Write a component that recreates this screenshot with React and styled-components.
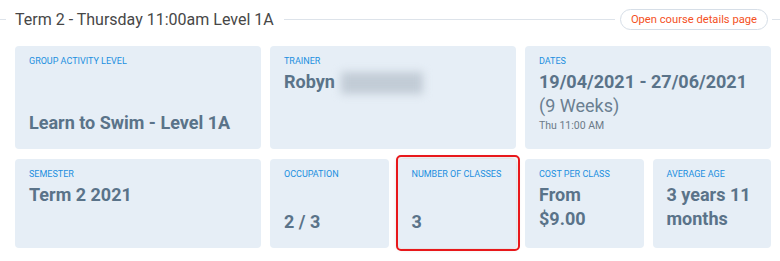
import React from 'react';
import styled, { createGlobalStyle } from 'styled-components';

const GlobalStyle = createGlobalStyle`
  body {
    margin: 0;
    background: #fff;
    font-family: Roboto, 'Liberation Sans', sans-serif;
  }
`;

export default function App() {
  return (
    <>
      <GlobalStyle />
      <Section>
        <Header>
          <Line $w="6px" />
          <Title>Term 2 - Thursday 11:00am Level 1A</Title>
          <Line $grow />
          <LinkButton>Open course details page</LinkButton>
          <Line $w="8px" />
        </Header>
        <Grid>
          <Card $span={2} $h="103px">
            <Label>Group activity level</Label>
            <Value $bottom>Learn to Swim - Level 1A</Value>
          </Card>
          <Card $span={2} $h="103px">
            <Label>Trainer</Label>
            <Value>
              Robyn <Redacted />
            </Value>
          </Card>
          <Card $span={2} $h="103px">
            <Label>Dates</Label>
            <Value>19/04/2021 - 27/06/2021</Value>
            <SubValue>(9 Weeks)</SubValue>
            <Small>Thu 11:00 AM</Small>
          </Card>
          <Card $span={2} $h="89px">
            <Label>Semester</Label>
            <Value>Term 2 2021</Value>
          </Card>
          <Card $span={1} $h="89px">
            <Label>Occupation</Label>
            <Value $bottom>2 / 3</Value>
          </Card>
          <Card $span={1} $h="89px" $highlight>
            <Label>Number of classes</Label>
            <Value $bottom>3</Value>
          </Card>
          <Card $span={1} $h="89px">
            <Label>Cost per class</Label>
            <Value>From $9.00</Value>
          </Card>
          <Card $span={1} $h="89px">
            <Label>Average age</Label>
            <Value>3 years 11 months</Value>
          </Card>
        </Grid>
      </Section>
    </>
  );
}

const Section = styled.section`
  width: 780px;
  padding: 9px 0 13px;
`;

const Header = styled.div`
  display: flex;
  align-items: center;
  height: 21px;
`;

const Line = styled.div`
  height: 1px;
  background: #dde3ea;
  width: ${(p) => p.$w || 'auto'};
  flex: ${(p) => (p.$grow ? 1 : 'none')};
`;

const Title = styled.h2`
  margin: 0 10px 0 9px;
  font-size: 16px;
  font-weight: 400;
  color: #474747;
  white-space: nowrap;
`;

const LinkButton = styled.button`
  margin: 0 4px 0 5px;
  height: 21px;
  padding: 0 10px;
  border: 1px solid #d6dee7;
  border-radius: 11px;
  background: #fff;
  color: #f4511e;
  font-family: Roboto, 'Liberation Sans', sans-serif;
  font-size: 11.2px;
  white-space: nowrap;
  cursor: pointer;
`;

const Grid = styled.div`
  display: grid;
  grid-template-columns: repeat(6, 118.5px);
  gap: 10px 9px;
  padding: 16px 9px 0 15px;
`;

const Card = styled.div`
  position: relative;
  grid-column: span ${(p) => p.$span};
  height: ${(p) => p.$h};
  box-sizing: border-box;
  padding: 9px 14px 14px;
  display: flex;
  flex-direction: column;
  align-items: flex-start;
  background: #e6eef6;
  border-radius: 4px;
  ${(p) =>
    p.$highlight &&
    `
    box-shadow: 0 0 5px rgba(60, 70, 80, 0.35);
    &::after {
      content: '';
      position: absolute;
      top: -4px;
      left: -2px;
      right: -4px;
      bottom: -3px;
      border: 2px solid #e8181b;
      border-radius: 5px;
    }
  `}
`;

const Label = styled.div`
  font-size: 9px;
  line-height: 12px;
  text-transform: uppercase;
  color: #1b8fe0;
  margin-bottom: 3px;
  white-space: nowrap;
`;

const Value = styled.div`
  font-size: 18px;
  line-height: 24px;
  font-weight: 700;
  color: #5a7389;
  margin-top: ${(p) => (p.$bottom ? 'auto' : '0')};
`;

const SubValue = styled.div`
  font-size: 18px;
  line-height: 24px;
  color: #6b7f91;
`;

const Small = styled.div`
  font-size: 10.5px;
  line-height: 16px;
  color: #6b7a88;
`;

const Redacted = styled.span`
  display: inline-block;
  vertical-align: middle;
  width: 82px;
  height: 22px;
  margin-left: 2px;
  background: #c2ccd6;
  filter: blur(4px);
`;
